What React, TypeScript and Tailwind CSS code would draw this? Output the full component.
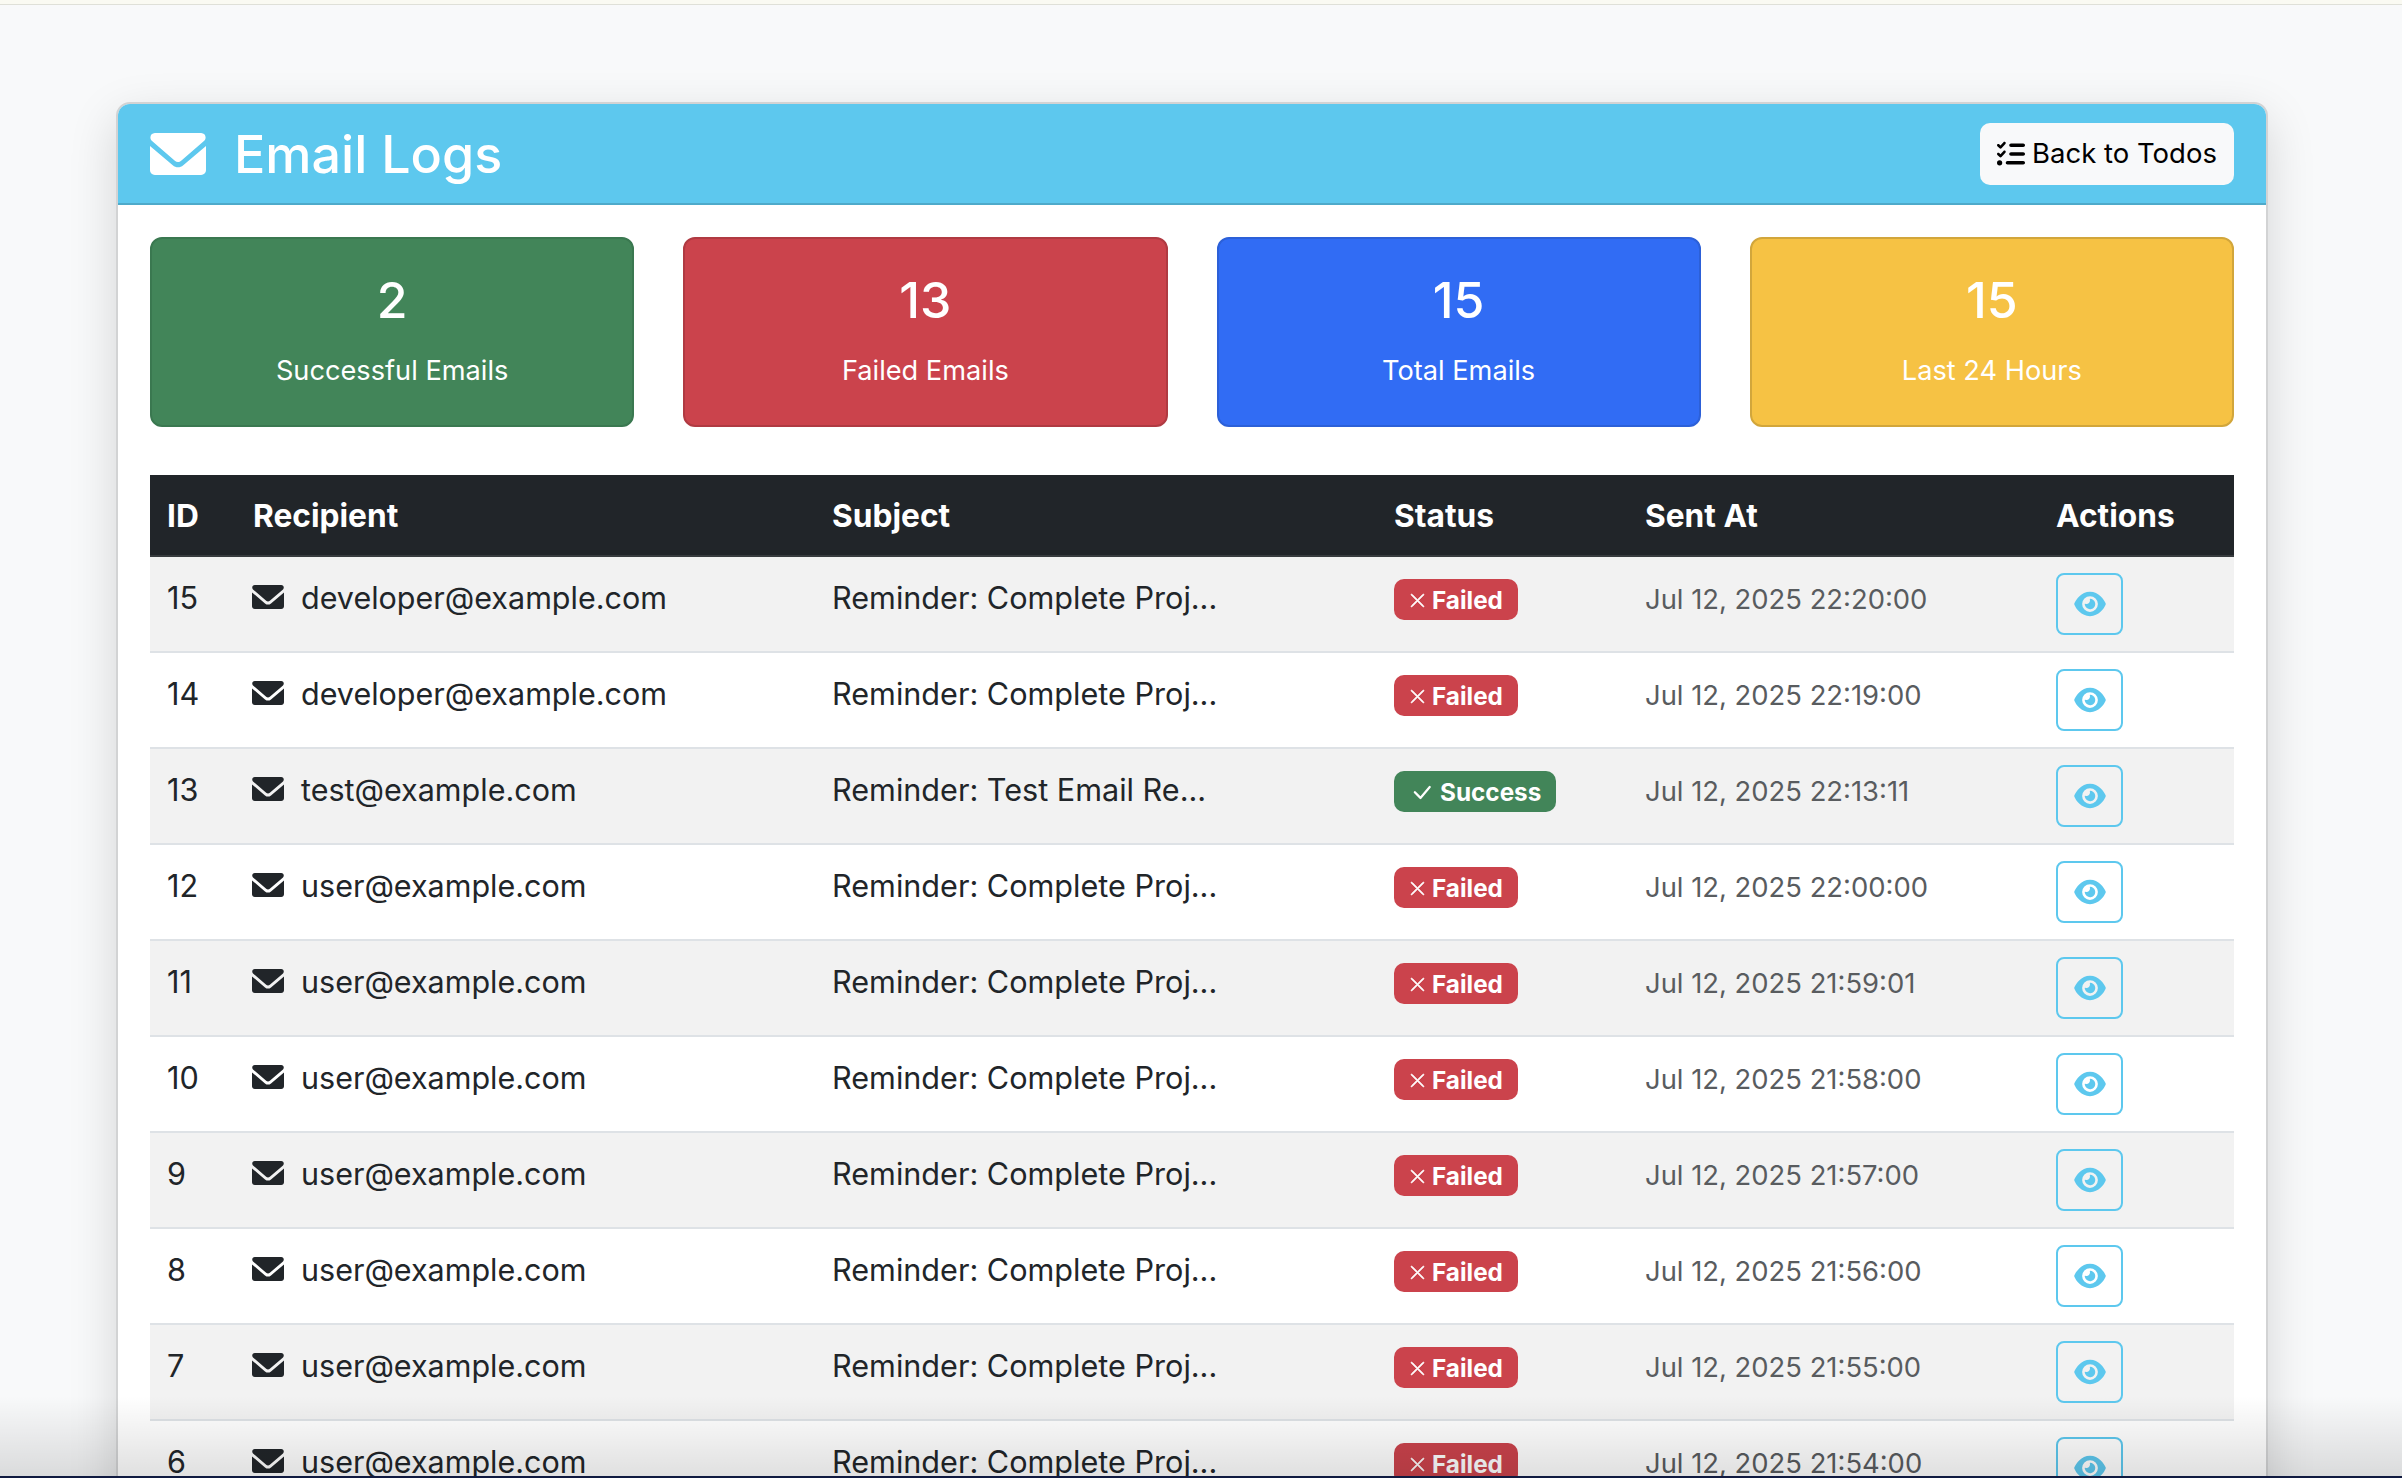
import { BsCheckLg, BsXLg } from "react-icons/bs";
import { FaEye, FaListCheck } from "react-icons/fa6";

const STATS = [
  { value: "2", label: "Successful Emails", box: "bg-[#428559] border-[#3a7850]" },
  { value: "13", label: "Failed Emails", box: "bg-[#cb434c] border-[#b03a42]" },
  { value: "15", label: "Total Emails", box: "bg-[#316cf4] border-[#2c60d8]" },
  { value: "15", label: "Last 24 Hours", box: "bg-[#f6c244] border-[#d2a63b]" },
];

const LOGS = [
  { id: 15, to: "developer@example.com", subject: "Reminder: Complete Proj...", ok: false, sent: "Jul 12, 2025 22:20:00" },
  { id: 14, to: "developer@example.com", subject: "Reminder: Complete Proj...", ok: false, sent: "Jul 12, 2025 22:19:00" },
  { id: 13, to: "test@example.com", subject: "Reminder: Test Email Re...", ok: true, sent: "Jul 12, 2025 22:13:11" },
  { id: 12, to: "user@example.com", subject: "Reminder: Complete Proj...", ok: false, sent: "Jul 12, 2025 22:00:00" },
  { id: 11, to: "user@example.com", subject: "Reminder: Complete Proj...", ok: false, sent: "Jul 12, 2025 21:59:01" },
  { id: 10, to: "user@example.com", subject: "Reminder: Complete Proj...", ok: false, sent: "Jul 12, 2025 21:58:00" },
  { id: 9, to: "user@example.com", subject: "Reminder: Complete Proj...", ok: false, sent: "Jul 12, 2025 21:57:00" },
  { id: 8, to: "user@example.com", subject: "Reminder: Complete Proj...", ok: false, sent: "Jul 12, 2025 21:56:00" },
  { id: 7, to: "user@example.com", subject: "Reminder: Complete Proj...", ok: false, sent: "Jul 12, 2025 21:55:00" },
  { id: 6, to: "user@example.com", subject: "Reminder: Complete Proj...", ok: false, sent: "Jul 12, 2025 21:54:00" },
];

// filled envelope, flap split from the body by a thin V
function EnvelopeIcon({ className }: { className: string }) {
  return (
    <svg viewBox="0 0 16 12" fill="currentColor" className={className}>
      <path d="M1.4 0H14.6C15.8 0 16.3 1.4 15.5 2.2L8.9 7.9C8.4 8.4 7.6 8.4 7.1 7.9L.5 2.2C-.3 1.4.2 0 1.4 0Z" />
      <path d="M0 3.7L6.5 9.2C7.4 10 8.6 10 9.5 9.2L16 3.7V10.6C16 11.4 15.4 12 14.6 12H1.4C.6 12 0 11.4 0 10.6Z" />
    </svg>
  );
}

function StatusBadge({ ok }: { ok: boolean }) {
  return (
    <span
      className={`mt-[6px] inline-flex h-[41px] items-center gap-[6px] rounded-[10px] px-[15px] pt-[1px] text-[24.3px] font-bold leading-none text-white ${
        ok ? "bg-[#428559]" : "bg-[#cb434c]"
      }`}
    >
      {ok ? <BsCheckLg className="h-[25px] w-[25px]" /> : <BsXLg className="h-[17px] w-[17px] stroke-[0.8px]" />}
      {ok ? "Success" : "Failed"}
    </span>
  );
}

export default function App() {
  return (
    <div className="relative h-[1478px] overflow-hidden bg-[#f8f9fa] font-['Inter',sans-serif] text-[#212529]">
      <div className="h-[5px] border-b border-[#dfe0d8] bg-[#fafaf2]" />

      <div className="ml-[116px] mt-[97px] w-[2152px] overflow-hidden rounded-t-[14px] border-2 border-[#d2d3d4] bg-white shadow-[0_16px_48px_rgba(0,0,0,0.15)]">
        <div className="flex h-[101px] items-center justify-between border-b-2 border-[#4eaaca] bg-[#5dc8ee] px-[32px]">
          <h1 className="flex items-center gap-[28px] pt-[1px] text-[52px] font-medium leading-none text-white">
            <EnvelopeIcon className="h-[42px] w-[56px]" />
            <span className="pt-[2px]">Email Logs</span>
          </h1>
          <button className="flex h-[62px] w-[254px] items-center justify-center gap-[7px] rounded-[10px] bg-[#f8f9fa] pt-[1px] text-[27.5px] text-black">
            <FaListCheck className="h-[28px] w-[28px]" />
            Back to Todos
          </button>
        </div>

        <div className="px-[32px] pt-[32px]">
          <div className="grid grid-cols-4 gap-[49px]">
            {STATS.map((s) => (
              <div
                key={s.label}
                className={`flex h-[190px] flex-col items-center rounded-[12px] border-2 pt-[32px] text-white ${s.box}`}
              >
                <div className="text-[50px] font-medium leading-[58px]">{s.value}</div>
                <div className="mt-[22px] text-[27.2px] leading-[40px]">{s.label}</div>
              </div>
            ))}
          </div>

          <table className="mt-[48px] w-full table-fixed border-collapse">
            <thead>
              <tr className="h-[81px] border-b-2 border-[#373b3e] bg-[#212529] text-left text-[31.7px] text-white">
                <th className="w-[86px] pl-[17px] pt-[2px] font-bold">ID</th>
                <th className="w-[579px] pl-[17px] pt-[2px] font-bold">Recipient</th>
                <th className="w-[562px] pl-[17px] pt-[2px] font-bold">Subject</th>
                <th className="w-[251px] pl-[17px] pt-[2px] font-bold">Status</th>
                <th className="w-[411px] pl-[17px] pt-[2px] font-bold">Sent At</th>
                <th className="pl-[17px] pt-[2px] font-bold">Actions</th>
              </tr>
            </thead>
            <tbody>
              {LOGS.map((log, i) => (
                <tr key={log.id} className={`h-[96px] border-b-2 border-[#dee2e6] ${i % 2 === 0 ? "bg-[#f2f2f2]" : "bg-white"}`}>
                  <td className="px-[17px] pt-[17px] align-top text-[30.6px] leading-[48px]">{log.id}</td>
                  <td className="px-[16px] pt-[17px] align-top text-[30.5px] leading-[48px]">
                    <div className="flex items-center gap-[17px]">
                      <EnvelopeIcon className="mb-[2px] h-[24px] w-[32px] shrink-0" />
                      {log.to}
                    </div>
                  </td>
                  <td className="px-[17px] pt-[17px] align-top text-[30.6px] leading-[48px]">{log.subject}</td>
                  <td className="px-[17px] pt-[16px] align-top">
                    <StatusBadge ok={log.ok} />
                  </td>
                  <td className="px-[17px] pt-[18px] align-top text-[27.4px] leading-[48px] text-[#595c5f]">{log.sent}</td>
                  <td className="px-[17px] pt-[16px] align-top">
                    <button className="flex h-[62px] w-[67px] items-center justify-center rounded-[8px] border-2 border-[#5dc8ee] text-[#5dc8ee]">
                      <FaEye className="h-[28px] w-[32px]" />
                    </button>
                  </td>
                </tr>
              ))}
            </tbody>
          </table>
        </div>
      </div>

      {/* dock shadow over the page bottom */}
      <div className="pointer-events-none absolute inset-x-0 bottom-[2px] h-[80px] bg-gradient-to-b from-transparent to-[rgba(0,0,0,0.12)]" />
      <div className="absolute inset-x-0 bottom-0 h-[2px] bg-[#101a40]" />
    </div>
  );
}
